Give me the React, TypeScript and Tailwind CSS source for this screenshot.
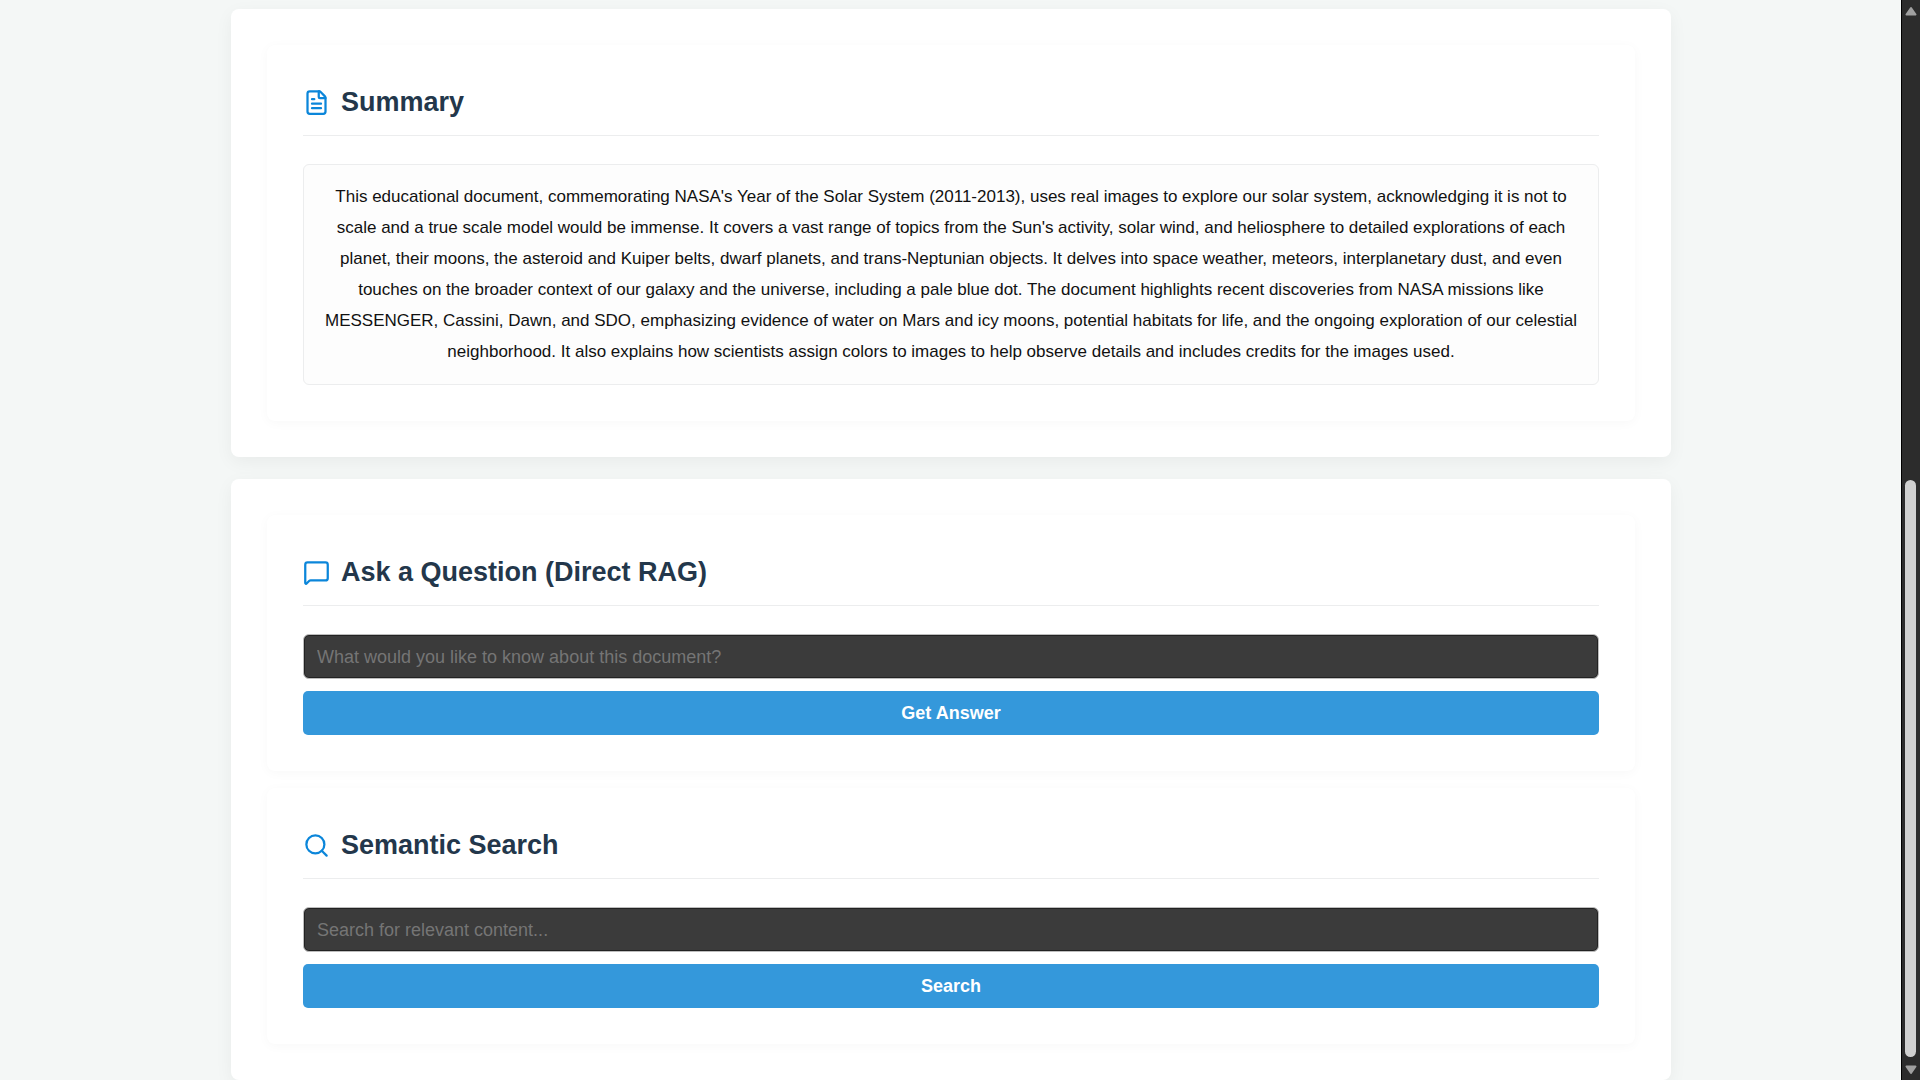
import type { ReactNode } from "react";
import { FileText, MessageSquare, Search, type LucideIcon } from "lucide-react";

function Card({ children }: { children: ReactNode }) {
  return (
    <div className="flex flex-col gap-[17px] rounded-lg bg-white p-9 shadow-[0_5px_18px_rgba(0,0,0,0.05)]">
      {children}
    </div>
  );
}

function Section({ icon: Icon, title, children }: { icon: LucideIcon; title: string; children: ReactNode }) {
  return (
    <section className="rounded-lg bg-white p-9 shadow-[0_2px_12px_rgba(0,0,0,0.03)]">
      <h2 className="mb-7 flex h-[55px] items-start gap-[11px] border-b border-[#ecedee] text-[27px] leading-[42px] font-bold text-[#23374b]">
        <Icon className="mt-2 size-[27px] shrink-0 text-[#0b86da]" strokeWidth={2} aria-hidden="true" />
        {title}
      </h2>
      {children}
    </section>
  );
}

function QueryForm({ label, placeholder, action }: { label: string; placeholder: string; action: string }) {
  return (
    <form className="flex flex-col gap-3" onSubmit={(event) => event.preventDefault()}>
      <input
        type="text"
        aria-label={label}
        placeholder={placeholder}
        className="h-[45px] w-full rounded-md border border-[#bdbdbd] bg-[#3b3b3b] px-[13px] pt-0.5 text-lg text-white shadow-[inset_0_0_0_1px_#222222] placeholder:text-[#757575] focus:outline-none"
      />
      <button type="submit" className="h-11 w-full rounded-[5px] bg-[#3498db] pb-px text-lg font-bold text-white">
        {action}
      </button>
    </form>
  );
}

function ScrollBar() {
  return (
    <div
      className="sticky top-0 flex h-screen w-[18px] shrink-0 flex-col items-center bg-[#2c2c2c] pt-1.5 pr-px pb-[5px] shadow-[-1px_0_0_#000]"
      aria-hidden="true"
    >
      <svg className="h-2.5 w-3 shrink-0" viewBox="0 0 12 10">
        <path d="M6 2 10.5 8.500H1.500Z" fill="#a0a0a0" stroke="#a0a0a0" strokeWidth="2" strokeLinejoin="round" />
      </svg>
      <div className="grow-[464]" />
      <div className="mb-2 w-[11px] grow-[577] rounded-full bg-[#d0d0d0]" />
      <svg className="h-2.5 w-3 shrink-0" viewBox="0 0 12 10">
        <path d="M6 8 10.500 1.500H1.500Z" fill="#a0a0a0" stroke="#a0a0a0" strokeWidth="2" strokeLinejoin="round" />
      </svg>
    </div>
  );
}

export default function App() {
  return (
    <div className="flex min-h-screen bg-[#f4f7f6] font-['Liberation_Sans',Arial,sans-serif]">
      <main className="min-w-0 grow">
        <div className="mx-auto flex max-w-[1440px] flex-col gap-[22px] pt-[9px]">
          <Card>
            <Section icon={FileText} title="Summary">
              <p className="rounded-md border border-[#ecedee] bg-[#fdfdfd] px-4 pt-4 pb-[17px] text-center text-[17px] leading-[31px] text-[#111111]">
                This educational document, commemorating NASA's Year of the Solar System (2011-2013), uses real images
                to explore our solar system, acknowledging it is not to scale and a true scale model would be immense.
                It covers a vast range of topics from the Sun's activity, solar wind, and heliosphere to detailed
                explorations of each planet, their moons, the asteroid and Kuiper belts, dwarf planets, and
                trans-Neptunian objects. It delves into space weather, meteors, interplanetary dust, and even touches
                on the broader context of our galaxy and the universe, including a pale blue dot. The document
                highlights recent discoveries from NASA missions like MESSENGER, Cassini, Dawn, and SDO, emphasizing
                evidence of water on Mars and icy moons, potential habitats for life, and the ongoing exploration of
                our celestial neighborhood. It also explains how scientists assign colors to images to help observe
                details and includes credits for the images used.
              </p>
            </Section>
          </Card>
          <Card>
            <Section icon={MessageSquare} title="Ask a Question (Direct RAG)">
              <QueryForm
                label="Question"
                placeholder="What would you like to know about this document?"
                action="Get Answer"
              />
            </Section>
            <Section icon={Search} title="Semantic Search">
              <QueryForm label="Search terms" placeholder="Search for relevant content..." action="Search" />
            </Section>
          </Card>
        </div>
      </main>
      <ScrollBar />
    </div>
  );
}
